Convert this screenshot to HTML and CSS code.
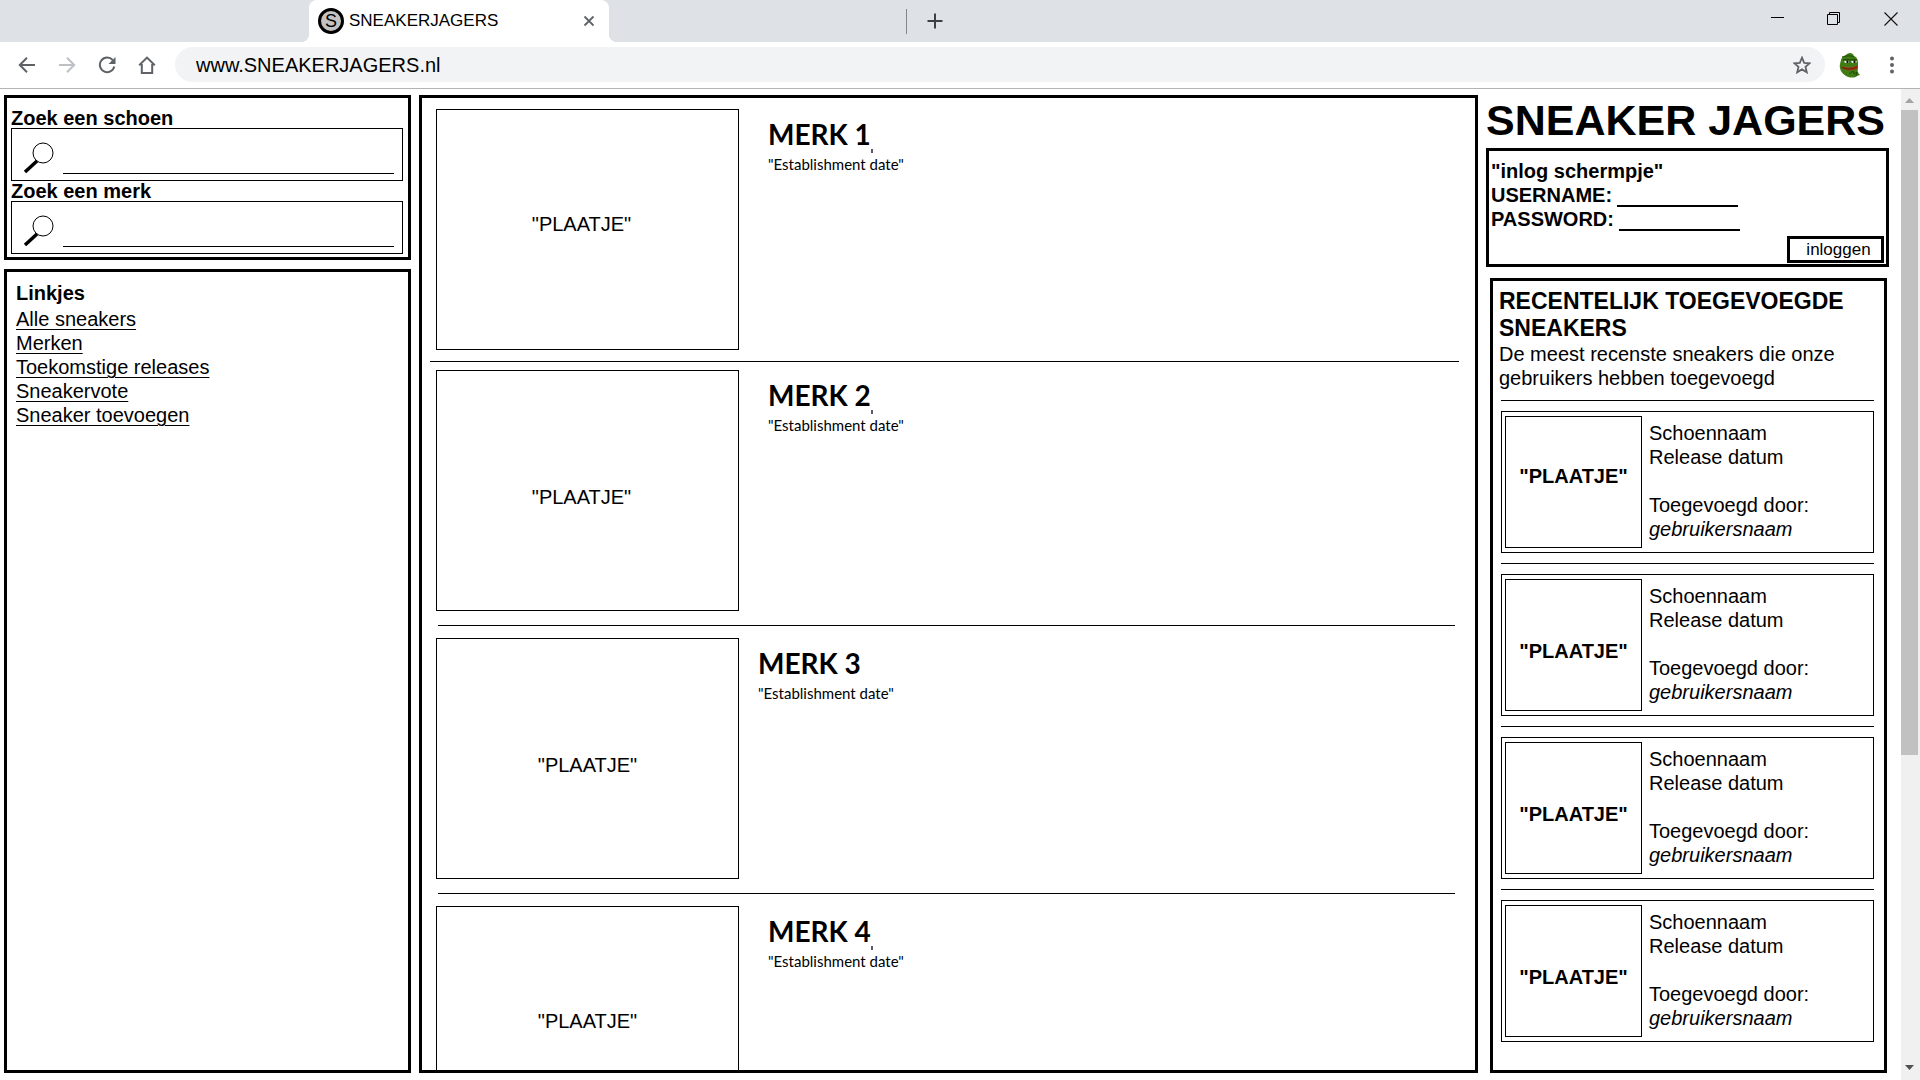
FILE: index.html
```html
<!DOCTYPE html>
<html lang="nl">
<head>
<meta charset="utf-8">
<title>SNEAKERJAGERS</title>
<link rel="stylesheet" href="styles.css">
</head>
<body>
<header class="browser">
  <div class="tabstrip">
    <div class="tab">
      <svg class="favicon" width="26" height="26" viewBox="0 0 26 26" aria-hidden="true"><circle cx="13" cy="13" r="11.5" fill="#c3c3c3" stroke="#000" stroke-width="3"/><text x="13" y="19" text-anchor="middle" class="favicon-letter">S</text></svg>
      <span class="tab-title">SNEAKERJAGERS</span>
      <button class="icon-button" aria-label="Tabblad sluiten"><svg width="12" height="12" viewBox="0 0 12 12"><path d="M1.5 1.5l9 9M10.5 1.5l-9 9" stroke="#5f6368" stroke-width="1.8"/></svg></button>
    </div>
    <span class="tab-divider"></span>
    <button class="icon-button" aria-label="Nieuw tabblad"><svg width="16" height="16" viewBox="0 0 16 16"><path d="M8 .5v15M.5 8h15" stroke="#3c4043" stroke-width="2"/></svg></button>
    <div class="window-controls">
      <button class="icon-button" aria-label="Minimaliseren"><svg width="14" height="14" viewBox="0 0 14 14"><path d="M1 5.500h13" stroke="#000"/></svg></button>
      <button class="icon-button" aria-label="Verkleinen"><svg width="14" height="14" viewBox="0 0 14 14" fill="none" stroke="#000"><path d="M.5 2.500h10v10H.5zM2.500 2.500v-2h10v10h-2"/></svg></button>
      <button class="icon-button" aria-label="Sluiten"><svg width="14" height="14" viewBox="0 0 14 14"><path d="M.5.5l13 13M13.500.5l-13 13" stroke="#111" stroke-width="1.100"/></svg></button>
    </div>
  </div>
  <div class="toolbar">
    <nav class="nav-buttons">
      <button class="icon-button" aria-label="Terug"><svg width="18" height="18" viewBox="0 0 18 18" fill="none" stroke="#5f6368" stroke-width="2"><path d="M17 9H2.500M9 1.800L1.800 9 9 16.200"/></svg></button>
      <button class="icon-button" aria-label="Vooruit"><svg width="18" height="18" viewBox="0 0 18 18" fill="none" stroke="#bdc1c6" stroke-width="2"><path d="M1 9h14.500M9 1.800L16.200 9 9 16.200"/></svg></button>
      <button class="icon-button" aria-label="Vernieuwen"><svg width="18" height="18" viewBox="0 0 18 18"><path d="M14.800 4.200A7.300 7.300 0 1 0 16.300 10.500" fill="none" stroke="#5f6368" stroke-width="2"/><path d="M17.500 1v7h-7z" fill="#5f6368"/></svg></button>
      <button class="icon-button" aria-label="Startpagina"><svg width="18" height="18" viewBox="0 0 18 18" fill="none" stroke="#5f6368" stroke-width="2"><path d="M1.200 9.300L9 1.600l7.800 7.700M3.800 8v9h10.400V8"/></svg></button>
    </nav>
    <div class="omnibox">
      <input class="address" type="text" value="www.SNEAKERJAGERS.nl" aria-label="Adres">
      <button class="icon-button" aria-label="Bladwijzer toevoegen"><svg width="18" height="18" viewBox="0 0 18 18"><path d="M9 1.700l2.200 5.100 5.500.5-4.200 3.600 1.300 5.400L9 13.400l-4.800 2.900 1.300-5.400L1.300 7.300l5.500-.5z" fill="none" stroke="#5f6368" stroke-width="1.800"/></svg></button>
    </div>
    <button class="icon-button" aria-label="Profiel"><svg width="22" height="26" viewBox="0 0 22 26"><path d="M2 8C3 4 6 4 8 2c3-2 6-1 7 2 3 1 4 4 4 7v6c-1 2 0 4 2 6l-3 1c-2 2-7 2-11 0C2 21 0 16 1 12z" fill="#3f7d14"/><path d="M3 5c4-1 8-2 12 0M4 8c3-1 5-1 7 0 3-1 5-1 7 0" stroke="#1f4a0a" fill="none"/><path d="M5 9h5v2H6zM12 9h6l-1 2h-4z" fill="#e9efe0"/><path d="M7.500 8.500h2v2.500h-2zM14.500 8.500h2v2.500h-2z" fill="#111"/><path d="M2 14c5 2 11 2 17-1l-1 4c-5 2-11 2-15-1z" fill="#a53a16"/><path d="M3 15.500c5 2 10 2 15-.5" stroke="#5c1c08" fill="none"/><path d="M10 22l4-3 1 3 3-2-1 4" stroke="#1f4a0a" fill="none"/></svg></button>
    <button class="icon-button" aria-label="Menu"><svg width="18" height="18" viewBox="0 0 18 18" fill="#5f6368"><circle cx="9" cy="2.500" r="2"/><circle cx="9" cy="9" r="2"/><circle cx="9" cy="15.500" r="2"/></svg></button>
  </div>
</header>

<div class="viewport">
  <main class="page">
    <aside class="column">
      <form class="panel search">
        <label class="search-label" for="schoen">Zoek een schoen</label>
        <div class="search-box">
          <svg width="32" height="32" viewBox="0 0 32 32" aria-hidden="true"><ellipse cx="21" cy="11" rx="10" ry="10" fill="none" stroke="#000"/><path d="M15 19L3 30" stroke="#000" stroke-width="3.500"/></svg>
          <input class="search-input" id="schoen" type="text">
        </div>
        <label class="search-label" for="merk">Zoek een merk</label>
        <div class="search-box">
          <svg width="32" height="32" viewBox="0 0 32 32" aria-hidden="true"><ellipse cx="21" cy="11" rx="10" ry="10" fill="none" stroke="#000"/><path d="M15 19L3 30" stroke="#000" stroke-width="3.500"/></svg>
          <input class="search-input" id="merk" type="text">
        </div>
      </form>
      <nav class="panel links">
        <h2 class="links-title">Linkjes</h2>
        <a href="#alle">Alle sneakers</a>
        <a href="#merken">Merken</a>
        <a href="#releases">Toekomstige releases</a>
        <a href="#vote">Sneakervote</a>
        <a href="#toevoegen">Sneaker toevoegen</a>
      </nav>
    </aside>

    <section class="panel brands">
      <article class="brand">
        <div class="picture picture-large label-high label-left">"PLAATJE"</div>
        <div><h2 class="brand-name ticked">MERK 1</h2><p class="brand-date">"Establishment date"</p></div>
      </article>
      <hr class="rule rule-wide">
      <article class="brand">
        <div class="picture picture-large label-low label-left">"PLAATJE"</div>
        <div><h2 class="brand-name ticked">MERK 2</h2><p class="brand-date">"Establishment date"</p></div>
      </article>
      <hr class="rule rule-inset">
      <article class="brand brand-close">
        <div class="picture picture-large label-low">"PLAATJE"</div>
        <div><h2 class="brand-name">MERK 3</h2><p class="brand-date">"Establishment date"</p></div>
      </article>
      <hr class="rule rule-inset">
      <article class="brand">
        <div class="picture picture-large label-high">"PLAATJE"</div>
        <div><h2 class="brand-name ticked">MERK 4</h2><p class="brand-date">"Establishment date"</p></div>
      </article>
    </section>

    <aside class="column">
      <h1 class="site-title">SNEAKER JAGERS</h1>
      <form class="panel login">
        <p>"inlog schermpje"</p>
        <div class="field"><label for="user">USERNAME:</label><input class="field-input" id="user" type="text"></div>
        <div class="field"><label for="pass">PASSWORD:</label><input class="field-input" id="pass" type="password"></div>
        <button class="login-button" type="button">inloggen</button>
      </form>
      <section class="panel recent">
        <h2 class="recent-title">RECENTELIJK TOEGEVOEGDE SNEAKERS</h2>
        <p>De meest recenste sneakers die onze gebruikers hebben toegevoegd</p>
        <hr class="rule rule-card">
        <article class="card">
          <div class="picture picture-small label-high">"PLAATJE"</div>
          <div class="card-text"><p>Schoennaam</p><p>Release datum</p><p class="added">Toegevoegd door:</p><p><em>gebruikersnaam</em></p></div>
        </article>
        <hr class="rule rule-card">
        <article class="card">
          <div class="picture picture-small label-low">"PLAATJE"</div>
          <div class="card-text"><p>Schoennaam</p><p>Release datum</p><p class="added">Toegevoegd door:</p><p><em>gebruikersnaam</em></p></div>
        </article>
        <hr class="rule rule-card">
        <article class="card">
          <div class="picture picture-small label-low">"PLAATJE"</div>
          <div class="card-text"><p>Schoennaam</p><p>Release datum</p><p class="added">Toegevoegd door:</p><p><em>gebruikersnaam</em></p></div>
        </article>
        <hr class="rule rule-card">
        <article class="card">
          <div class="picture picture-small label-low">"PLAATJE"</div>
          <div class="card-text"><p>Schoennaam</p><p>Release datum</p><p class="added">Toegevoegd door:</p><p><em>gebruikersnaam</em></p></div>
        </article>
      </section>
    </aside>
  </main>
  <div class="scrollbar" aria-hidden="true">
    <svg width="17" height="21" viewBox="0 0 17 21"><path d="M4 14l4.500-5 4.500 5z" fill="#a3a3a3"/></svg>
    <div class="scroll-track"><div class="scroll-thumb"></div></div>
    <svg width="17" height="21" viewBox="0 0 17 21"><path d="M4 6l4.500 5L13 6z" fill="#505050"/></svg>
  </div>
</div>
</body>
</html>
```
FILE: styles.css
```css
* {
  box-sizing: border-box;
}

body {
  margin: 0;
  height: 100vh;
  display: flex;
  flex-direction: column;
  overflow: hidden;
  background: #fff;
  color: #000;
  font: 20px/24px "Liberation Sans", Arial, sans-serif;
}

h1, h2, p {
  margin: 0;
}

a {
  color: inherit;
  text-decoration-thickness: 1px;
  text-underline-offset: 3px;
}

input {
  min-width: 0;
  padding: 0;
  border: 0;
  outline: 0;
  background: transparent;
  color: inherit;
  font: inherit;
}

.icon-button {
  display: flex;
  padding: 0;
  border: 0;
  background: none;
}

/* Browser frame */

.browser {
  flex: none;
  border-bottom: 1px solid #b4b4b4;
}

.tabstrip {
  display: flex;
  align-items: center;
  height: 42px;
  padding: 0 22px 0 309px;
  background: #dee1e6;
}

.tab {
  position: relative;
  display: flex;
  align-items: center;
  align-self: stretch;
  width: 300px;
  padding: 0 14px 0 9px;
  border-radius: 8px 8px 0 0;
  background: #fff;
}

.tab::before,
.tab::after {
  content: "";
  position: absolute;
  bottom: 0;
  width: 8px;
  height: 8px;
}

.tab::before {
  right: 100%;
  background: radial-gradient(circle at 0 0, transparent 8px, #fff 8px);
}

.tab::after {
  left: 100%;
  background: radial-gradient(circle at 100% 0, transparent 8px, #fff 8px);
}

.favicon-letter {
  font: 18px "Liberation Sans", Arial, sans-serif;
}

.tab-title {
  flex: 1;
  margin-left: 5px;
  font-size: 17px;
}

.tab-divider {
  width: 1px;
  height: 25px;
  margin: 0 20px 0 297px;
  background: #80868b;
}

.window-controls {
  display: flex;
  gap: 43px;
  margin: 0 0 4px auto;
}

.toolbar {
  display: flex;
  align-items: center;
  height: 46px;
  padding: 0 19px 1px 18px;
}

.nav-buttons {
  display: flex;
  gap: 22px;
  margin-right: 19px;
}

.omnibox {
  flex: 1;
  display: flex;
  align-items: center;
  height: 35px;
  margin-right: 14px;
  padding: 0 14px 0 21px;
  border-radius: 18px;
  background: #f1f3f4;
}

.address {
  flex: 1;
}

.toolbar > .icon-button:last-child {
  margin-left: 22px;
}

/* Page */

.viewport {
  flex: 1;
  min-height: 0;
  display: flex;
}

.page {
  flex: 1;
  display: grid;
  grid-template-columns: 407px 1fr 403px;
  grid-template-rows: minmax(0, 1fr);
  column-gap: 8px;
  padding: 6px 12px 7px 4px;
}

.column {
  display: flex;
  flex-direction: column;
}

.panel {
  border: 3px solid #000;
}

.search {
  padding: 10px 5px 3px 4px;
}

.search-label {
  display: block;
  font-weight: bold;
  line-height: 20px;
}

.search-box {
  display: flex;
  align-items: flex-end;
  gap: 9px;
  height: 53px;
  padding: 0 8px 6px 10px;
  border: 1px solid #000;
}

.search-input {
  flex: 1;
  border-bottom: 1px solid #000;
}

.links {
  flex: 1;
  display: flex;
  flex-direction: column;
  align-items: flex-start;
  margin-top: 9px;
  padding: 9px;
}

.links-title {
  margin-bottom: 2px;
  font-size: 20px;
}

.brands {
  overflow: hidden;
  padding: 11px 16px 0 8px;
}

.brand {
  display: flex;
  gap: 29px;
  padding-left: 6px;
}

.brand-close {
  gap: 19px;
}

.picture {
  flex: none;
  display: flex;
  align-items: center;
  justify-content: center;
  border: 1px solid #000;
}

.picture-large {
  width: 303px;
  height: 241px;
}

.picture-small {
  width: 137px;
  height: 132px;
  font-weight: bold;
}

.label-high {
  padding-bottom: 12px;
}

.label-low {
  padding-top: 12px;
}

.label-left {
  padding-right: 12px;
}

.brand-name {
  position: relative;
  width: max-content;
  margin-top: 8px;
  font: bold 28px/34px Lato, sans-serif;
}

.ticked::after {
  content: "";
  position: absolute;
  left: 100%;
  bottom: -2px;
  width: 2px;
  height: 4px;
  background: #5a5a6a;
}

.brand-date {
  margin-top: 3px;
  font: 15px/20px Lato, sans-serif;
}

.rule {
  height: 1px;
  border: 0;
  background: #000;
}

.rule-wide {
  margin: 11px 0 8px;
}

.rule-inset {
  margin: 14px 4px 12px 8px;
}

.rule-card {
  margin: 10px 2px;
}

.site-title {
  margin-bottom: 3px;
  font-size: 43px;
  line-height: 50px;
  white-space: nowrap;
}

.login {
  padding: 8px 2px 1px;
  font-weight: bold;
}

.field {
  display: flex;
  gap: 5px;
  height: 24px;
}

.field-input {
  width: 121px;
  border-bottom: 2px solid #000;
}

.login-button {
  display: block;
  width: 97px;
  height: 27px;
  margin: 5px 0 0 auto;
  padding: 0 0 0 6px;
  border: 3px solid #000;
  background: #fff;
  color: #000;
  font: 17px/20px "Liberation Sans", Arial, sans-serif;
}

.recent {
  flex: 1;
  margin: 11px 2px 0 4px;
  padding: 7px 8px 0 6px;
}

.recent-title {
  font-size: 23px;
  line-height: 27px;
}

.card {
  display: flex;
  gap: 7px;
  height: 142px;
  margin: 0 2px;
  padding: 4px 3px;
  border: 1px solid #000;
}

.card-text {
  padding-top: 5px;
}

.added {
  margin-top: 24px;
}

/* Scrollbar */

.scrollbar {
  display: flex;
  flex-direction: column;
  width: 19px;
  background: #f0f0f0;
}

.scroll-track {
  flex: 1;
}

.scroll-thumb {
  width: 17px;
  height: 68%;
  background: #c1c1c1;
}
```
